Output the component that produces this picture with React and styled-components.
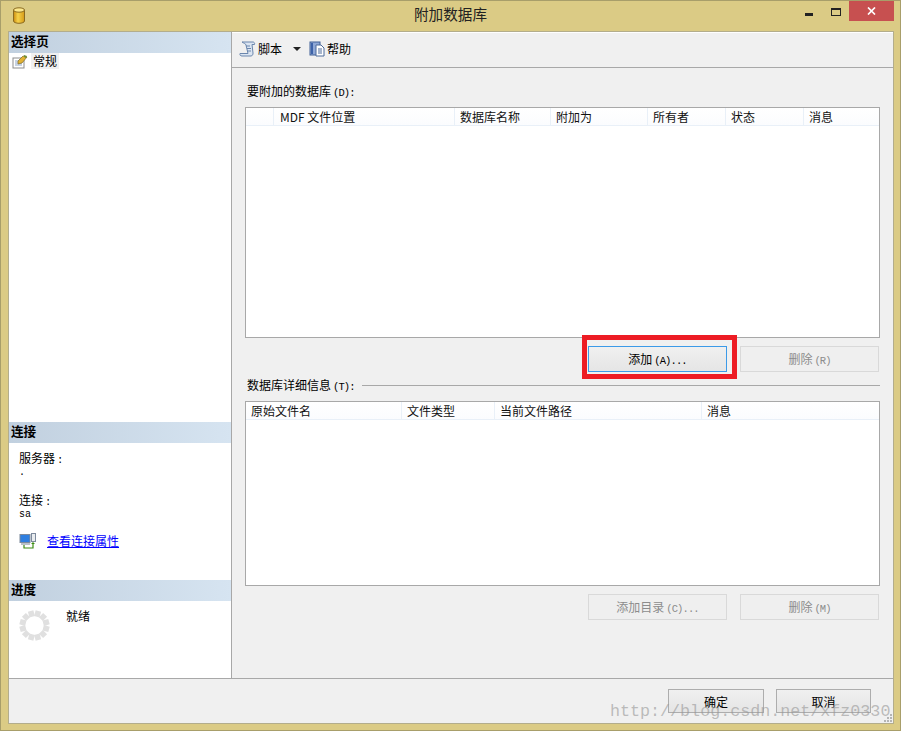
import React from 'react';
import styled, { createGlobalStyle } from 'styled-components';

const GlobalStyle = createGlobalStyle`
  html, body { margin: 0; padding: 0; background: #dbcb85; }
  * { box-sizing: border-box; }
`;

const FONT = `"Noto Sans CJK SC", "DejaVu Sans", sans-serif`;

const columnsTop = [
  { label: '', width: 28 },
  { label: 'MDF 文件位置', width: 181, inset: 6 },
  { label: '数据库名称', width: 96 },
  { label: '附加为', width: 97 },
  { label: '所有者', width: 78 },
  { label: '状态', width: 78 },
  { label: '消息', width: 75 },
];

const columnsBottom = [
  { label: '原始文件名', width: 156 },
  { label: '文件类型', width: 93 },
  { label: '当前文件路径', width: 207 },
  { label: '消息', width: 177 },
];

const Cylinder = () => (
  <svg width="14" height="17" viewBox="0 0 14 17">
    <defs>
      <linearGradient id="cyl" x1="0" x2="1" y1="0" y2="0">
        <stop offset="0" stopColor="#c98a10" />
        <stop offset="0.4" stopColor="#f6d24a" />
        <stop offset="1" stopColor="#d59a18" />
      </linearGradient>
    </defs>
    <path d="M1.5 3v11c0 1.3 2.5 2.3 5.5 2.3s5.500-1 5.500-2.300V3z" fill="url(#cyl)" stroke="#8a6a20" />
    <ellipse cx="7" cy="3" rx="5.500" ry="2.200" fill="#fbe88e" stroke="#8a6a20" />
  </svg>
);

const FormIcon = () => (
  <svg width="17" height="15" viewBox="0 0 17 15">
    <rect x="1" y="4" width="11" height="10" fill="#fff" stroke="#8d8d8d" />
    <path d="M3 7h7M3 9h7M3 11h7" stroke="#8fa6c6" />
    <path d="M6 7l5-5 4 1-5 6-4 1z" fill="#e2b233" stroke="#7d6a2a" strokeWidth=".7" />
    <path d="M12 1l3 1-1 2-2-1z" fill="#6c8f3a" />
  </svg>
);

const ScrollIcon = () => (
  <svg width="17" height="16" viewBox="0 0 17 16">
    <path d="M3 1h11c1 0 2 1 1.500 2.500H13L14 12c.2 1.500-.8 3-2 3H3c-1.500 0-2.500-1-2-2.500h8L7 4C6.700 2.500 5 2.500 3 1z" fill="#dbe5f2" stroke="#6a86ad" />
    <path d="M7 5h4M8 7.500h4M8 10h4" stroke="#6a86ad" />
  </svg>
);

const HelpIcon = () => (
  <svg width="16" height="16" viewBox="0 0 16 16">
    <rect x="1" y="1" width="10" height="13" fill="#8fa8d6" stroke="#3f5f95" />
    <rect x="2" y="2" width="2" height="11" fill="#3d62a8" />
    <path d="M7 4h5l3 3v8H7z" fill="#fff" stroke="#4c6a9a" />
    <path d="M9 8h4M9 10h4M9 12h4" stroke="#4c6a9a" />
  </svg>
);

const ServerIcon = () => (
  <svg width="17" height="16" viewBox="0 0 17 16">
    <rect x="1" y="1.500" width="10" height="8" fill="#2f7fe0" stroke="#7d8a9c" />
    <rect x="2" y="10" width="9" height="2" fill="#b9c0c9" />
    <rect x="12.500" y=".5" width="4" height="8" fill="#e9ecef" stroke="#7d8a9c" />
    <path d="M5 12v3h9v-5" fill="none" stroke="#3c8c12" strokeWidth="1.200" />
    <path d="M12 11l2-2 2 2z" fill="#3c8c12" />
  </svg>
);

const Spinner = () => {
  const segs = Array.from({ length: 12 }, (_, i) => i * 30 + 15);
  return (
    <svg width="31" height="31" viewBox="-15.500 -15.500 31 31">
      {segs.map((a) => (
        <rect key={a} x="-2.800" y="-15" width="5.600" height="6" fill="#e0e0e0" transform={`rotate(${a})`} />
      ))}
    </svg>
  );
};

const Caret = () => (
  <svg width="8" height="4" viewBox="0 0 8 4">
    <path d="M0 0h8L4 4z" fill="#222" />
  </svg>
);

const Grip = () => (
  <svg width="9" height="9" viewBox="0 0 9 9" fill="#b5b5b5">
    <rect x="6" y="0" width="2" height="2" />
    <rect x="3" y="3" width="2" height="2" />
    <rect x="6" y="3" width="2" height="2" />
    <rect x="0" y="6" width="2" height="2" />
    <rect x="3" y="6" width="2" height="2" />
    <rect x="6" y="6" width="2" height="2" />
  </svg>
);

export default function App() {
  return (
    <>
      <GlobalStyle />
      <Window>
        <TitleBar>
          <AppIcon><Cylinder /></AppIcon>
          <Title>附加数据库</Title>
          <WinControls>
            <MinButton />
            <MaxButton />
            <CloseButton>
              <svg width="9" height="8" viewBox="0 0 9 8">
                <path d="M1 .5l7 7M8 .5l-7 7" stroke="#fff" strokeWidth="1.700" />
              </svg>
            </CloseButton>
          </WinControls>
        </TitleBar>

        <Client>
          <Main>
            <Sidebar>
              <SideHeader>选择页</SideHeader>
              <PageItem>
                <FormIcon />
                <PageLabel>常规</PageLabel>
              </PageItem>
              <SideSpacer />

              <SideHeader>连接</SideHeader>
              <ConnectBody>
                <FieldLabel>服务器<Lat>:</Lat></FieldLabel>
                <FieldValue>.</FieldValue>
                <FieldLabel $gap>连接<Lat>:</Lat></FieldLabel>
                <FieldValue>sa</FieldValue>
                <LinkRow>
                  <ServerIcon />
                  <PropLink href="#">查看连接属性</PropLink>
                </LinkRow>
              </ConnectBody>

              <SideHeader>进度</SideHeader>
              <ProgressBody>
                <Spinner />
                <ProgressText>就绪</ProgressText>
              </ProgressBody>
            </Sidebar>

            <Content>
              <Toolbar>
                <ToolButton>
                  <ScrollIcon />
                  <span>脚本</span>
                </ToolButton>
                <CaretWrap><Caret /></CaretWrap>
                <ToolButton>
                  <HelpIcon />
                  <span>帮助</span>
                </ToolButton>
              </Toolbar>

              <Panel>
                <SectionLabel>要附加的数据库<Lat>(D):</Lat></SectionLabel>
                <Grid $height={231}>
                  <GridHead>
                    {columnsTop.map((c) => (
                      <HeadCell key={c.label + c.width} $width={c.width} $inset={c.inset}>{c.label}</HeadCell>
                    ))}
                  </GridHead>
                </Grid>
                <ButtonRow>
                  <ActionButton $focused>添加<Lat>(A)...</Lat><Highlight /></ActionButton>
                  <ActionButton disabled>删除<Lat>(R)</Lat></ActionButton>
                </ButtonRow>

                <DividerRow>
                  <SectionText>数据库详细信息<Lat>(T):</Lat></SectionText>
                  <DividerLine />
                </DividerRow>
                <Grid $height={185}>
                  <GridHead>
                    {columnsBottom.map((c) => (
                      <HeadCell key={c.label} $width={c.width}>{c.label}</HeadCell>
                    ))}
                  </GridHead>
                </Grid>
                <ButtonRow>
                  <ActionButton disabled>添加目录<Lat>(C)...</Lat></ActionButton>
                  <ActionButton disabled>删除<Lat>(M)</Lat></ActionButton>
                </ButtonRow>
              </Panel>
            </Content>
          </Main>

          <Footer>
            <FooterButton $width={96}>确定</FooterButton>
            <FooterButton $width={95}>取消</FooterButton>
          </Footer>
          <GripWrap><Grip /></GripWrap>
          <Watermark>http://blog.csdn.net/xfz0330</Watermark>
        </Client>
      </Window>
    </>
  );
}

const Window = styled.div`
  width: 901px;
  height: 731px;
  background: #dbcb85;
  border: 1px solid #a89e6a;
  display: flex;
  flex-direction: column;
  font-family: ${FONT};
  font-size: 12px;
  color: #000;
  overflow: hidden;
`;

const TitleBar = styled.div`
  position: relative;
  height: 30px;
  flex: none;
  display: flex;
  align-items: center;
  justify-content: center;
`;

const AppIcon = styled.div`
  position: absolute;
  left: 11px;
  top: 6px;
  display: flex;
`;

const Title = styled.div`
  font-size: 14.600px;
  color: #222;
  margin-top: -5px;
`;

const WinControls = styled.div`
  position: absolute;
  right: 6px;
  top: 0;
  display: flex;
  align-items: flex-start;
`;

const MinButton = styled.div`
  width: 8px;
  height: 3px;
  background: #222;
  margin-top: 12px;
  margin-right: 18px;
`;

const MaxButton = styled.div`
  width: 10px;
  height: 8px;
  border: 1px solid #222;
  border-top-width: 2px;
  margin-top: 7px;
  margin-right: 8px;
`;

const CloseButton = styled.div`
  width: 45px;
  height: 20px;
  background: #c75050;
  display: flex;
  align-items: center;
  justify-content: center;
`;

const Client = styled.div`
  position: relative;
  flex: 1;
  margin: 0 6px 6px 7px;
  background: #f0f0f0;
  border: 1px solid #b3ad8c;
  display: flex;
  flex-direction: column;
  min-height: 0;
`;

const Main = styled.div`
  flex: 1;
  min-height: 0;
  display: flex;
  border-bottom: 1px solid #a8a8a8;
`;

const Sidebar = styled.div`
  width: 223px;
  flex: none;
  background: #fff;
  border-right: 1px solid #a8a8a8;
  display: flex;
  flex-direction: column;
`;

const SideHeader = styled.div`
  height: 21px;
  flex: none;
  background: linear-gradient(to right, #c1d0df, #d6e4f1);
  font-weight: bold;
  font-size: 12.600px;
  line-height: 18px;
  padding-left: 2px;
`;

const PageItem = styled.div`
  display: flex;
  align-items: center;
  gap: 2px;
  height: 16px;
  padding-left: 3px;
`;

const PageLabel = styled.span`
  background: #f0f0f0;
  padding: 0 2px;
  line-height: 16px;
`;

const SideSpacer = styled.div`
  height: 353px;
  flex: none;
`;

const ConnectBody = styled.div`
  height: 137px;
  flex: none;
  padding: 6px 0 0 10px;
`;

const FieldLabel = styled.div`
  line-height: 17px;
  margin-top: ${(p) => (p.$gap ? '13px' : '0')};
`;

const FieldValue = styled.div`
  font-family: "Liberation Mono", monospace;
  font-size: 10px;
  line-height: 10px;
  margin-top: -1px;
`;

const LinkRow = styled.div`
  display: flex;
  align-items: center;
  gap: 11px;
  margin-top: 12px;
`;

const PropLink = styled.a`
  color: #0000ff;
  text-decoration: underline;
`;

const ProgressBody = styled.div`
  display: flex;
  align-items: flex-start;
  padding: 9px 0 0 10px;
  gap: 16px;
`;

const ProgressText = styled.div`
  line-height: 16px;
  margin-top: -2px;
`;

const Content = styled.div`
  flex: 1;
  min-width: 0;
  display: flex;
  flex-direction: column;
`;

const Toolbar = styled.div`
  height: 36px;
  flex: none;
  display: flex;
  align-items: center;
  padding: 0 0 3px 7px;
  background: #f0f0f0;
  border-top: 1px solid #fff;
  border-bottom: 1px solid #a8a8a8;
`;

const ToolButton = styled.div`
  display: flex;
  align-items: center;
  gap: 2px;
`;

const CaretWrap = styled.div`
  display: flex;
  margin: 0 8px 0 11px;
`;

const Panel = styled.div`
  flex: 1;
  min-height: 0;
  padding: 0 13px;
  display: flex;
  flex-direction: column;
`;

const Lat = styled.span`
  font-family: "Liberation Mono", monospace;
  font-size: 10.500px;
  letter-spacing: -0.900px;
  margin-left: 2px;
`;

const SectionLabel = styled.div`
  height: 39px;
  flex: none;
  padding: 14px 0 0 2px;
  line-height: 17px;
`;

const SectionText = styled.div`
  line-height: 17px;
  white-space: nowrap;
  padding-left: 2px;
`;

const Grid = styled.div`
  height: ${(p) => p.$height}px;
  flex: none;
  background: #fff;
  border: 1px solid #a8a8a8;
`;

const GridHead = styled.div`
  height: 18px;
  display: flex;
  background: linear-gradient(to bottom, #fff, #fbfcfe);
  border-bottom: 1px solid #e9f0f8;
`;

const HeadCell = styled.div`
  flex: none;
  width: ${(p) => p.$width}px;
  height: 17px;
  line-height: 17px;
  padding-left: ${(p) => p.$inset || 5}px;
  border-right: 1px solid #e9f0f8;
  color: #111;
  &:last-child { border-right: 0; }
`;

const ButtonRow = styled.div`
  margin-top: 8px;
  display: flex;
  justify-content: flex-end;
  gap: 13px;
  padding-right: 1px;
`;

const ActionButton = styled.button`
  position: relative;
  width: 139px;
  height: 26px;
  padding: 0 0 2px;
  font-family: ${FONT};
  font-size: 12px;
  color: #000;
  background: ${(p) => (p.$focused ? 'linear-gradient(to bottom, #f0f0f0, #e5e5e5)' : '#efefef')};
  border: 1px solid ${(p) => (p.$focused ? '#3c9ae8' : '#d9d9d9')};
  &:disabled { color: #8c8c8c; }
`;

const Highlight = styled.span`
  position: absolute;
  left: -7px;
  top: -12px;
  width: 155px;
  height: 44px;
  border: 5px solid #ed1c24;
  pointer-events: none;
`;

const DividerRow = styled.div`
  height: 17px;
  margin-top: 5px;
  margin-bottom: 7px;
  display: flex;
  align-items: center;
  gap: 7px;
  flex: none;
`;

const DividerLine = styled.div`
  flex: 1;
  height: 1px;
  background: #a8a8a8;
`;

const Footer = styled.div`
  height: 44px;
  flex: none;
  display: flex;
  justify-content: flex-end;
  align-items: flex-start;
  gap: 12px;
  padding: 10px 22px 0 0;
`;

const FooterButton = styled.button`
  width: ${(p) => p.$width}px;
  height: 24px;
  padding: 0;
  font-family: ${FONT};
  font-size: 12px;
  color: #000;
  background: linear-gradient(to bottom, #f0f0f0, #e5e5e5);
  border: 1px solid #adadad;
`;

const GripWrap = styled.div`
  position: absolute;
  right: 0;
  bottom: 0;
  display: flex;
`;

const Watermark = styled.div`
  position: absolute;
  left: 601px;
  top: 670px;
  font-family: "Liberation Mono", monospace;
  font-size: 16.700px;
  line-height: 20px;
  white-space: nowrap;
  color: rgba(150, 150, 150, 0.6);
  pointer-events: none;
`;
